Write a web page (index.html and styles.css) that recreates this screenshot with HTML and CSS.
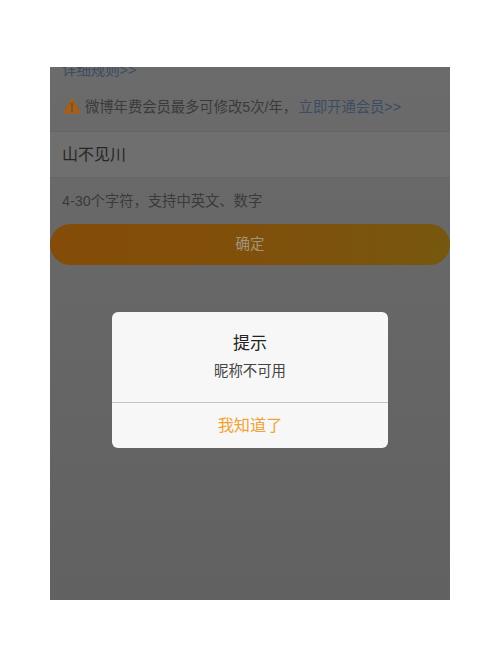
FILE: index.html
```html
<!DOCTYPE html>
<html>
<head>
    <meta charset="utf-8">
    <link rel="stylesheet" href="styles.css">
</head>
<body>
    <div class="screen">
        <div class="rules-cut"><span class="link">详细规则&gt;&gt;</span></div>
        <div class="notice">
            <svg class="warn-icon" viewBox="0 0 18 16">
                <path d="M9 1 L17.3 15 L0.7 15 Z" fill="#a1601c" stroke="#a1601c" stroke-width="1.6" stroke-linejoin="round"/>
                <path d="M8.2 5 H9.8 L9.5 11 H8.5 Z" fill="#5e4a34"/>
                <rect x="8.2" y="12" width="1.6" height="1.7" fill="#5e4a34"/>
            </svg>
            <span>微博年费会员最多可修改5次/年，<span class="link notice-link">立即开通会员&gt;&gt;</span></span>
        </div>
        <div class="name-row">山不见川</div>
        <div class="hint">4-30个字符，支持中英文、数字</div>
        <div class="confirm">确定</div>

        <div class="mask">
            <div class="dialog">
                <div class="dialog-body">
                    <div class="dialog-title">提示</div>
                    <div class="dialog-msg">昵称不可用</div>
                </div>
                <div class="dialog-btn">我知道了</div>
            </div>
        </div>
    </div>
</body>
</html>
```

FILE: styles.css
```css
body {
    margin: 0;
    background: #fff;
    font-family: "Liberation Sans", "Noto Sans CJK SC", sans-serif;
}

.screen {
    position: relative;
    width: 400px;
    height: 533px;
    margin: 67px 0 0 50px;
    background: linear-gradient(#6b6b6b, #616161);
    overflow: hidden;
}

.link {
    color: #3c4c62;
}

.notice-link {
    margin-left: 1.5px;
}

.rules-cut {
    height: 11px;
    padding-left: 12px;
    overflow: hidden;
    font-size: 14.4px;
    line-height: 7px;
}

.notice {
    display: flex;
    align-items: center;
    gap: 4px;
    height: 51px;
    padding: 2px 0 0 13px;
    color: #3a3a3a;
    font-size: 14.3px;
}

.warn-icon {
    width: 18px;
    height: 16px;
}

.name-row {
    height: 45px;
    padding-left: 12px;
    background: #6f6f6f;
    border-top: 1px solid #646464;
    border-bottom: 1px solid #646464;
    color: #262626;
    font-size: 16px;
    line-height: 45px;
}

.hint {
    height: 46px;
    padding-left: 12px;
    color: #3a3a3a;
    font-size: 14.3px;
    line-height: 46px;
}

.confirm {
    height: 41px;
    border-radius: 21px;
    background: linear-gradient(90deg, #844c08, #80500b 50%, #77570f);
    color: #a0967f;
    font-size: 14.5px;
    line-height: 41px;
    text-align: center;
}

.mask {
    position: absolute;
    inset: 0;
    display: flex;
    justify-content: center;
    align-items: flex-start;
    padding-top: 245px;
}

.dialog {
    width: 276px;
    height: 136px;
    border-radius: 6px;
    background: #f7f7f7;
    text-align: center;
}

.dialog-body {
    height: 91px;
    padding-top: 20px;
    box-sizing: border-box;
    border-bottom: 1px solid #c4c4c4;
}

.dialog-title {
    color: #222;
    font-size: 17px;
    line-height: 24px;
}

.dialog-msg {
    margin-top: 5px;
    color: #444;
    font-size: 14.4px;
    line-height: 20px;
}

.dialog-btn {
    color: #f0a335;
    font-size: 16.2px;
    line-height: 44px;
}
```
